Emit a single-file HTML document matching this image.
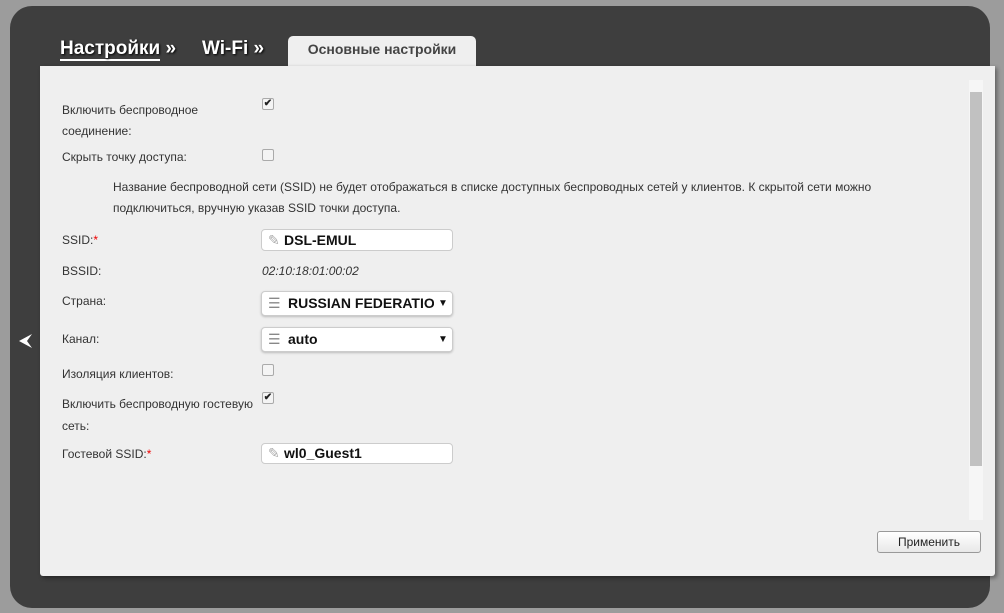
<!DOCTYPE html>
<html><head><meta charset="utf-8"><style>
*{margin:0;padding:0;box-sizing:border-box}
body{width:1004px;height:613px;background:#9c9c9c;position:relative;overflow:hidden;font-family:"Liberation Sans",Arial,sans-serif;font-size:12px;color:#333}
.dark{position:absolute;left:10px;top:6px;width:980px;height:602px;background:#3e3e3e;border-radius:22px}
.panel{position:absolute;left:40px;top:66px;width:955px;height:510px;background:#efefef;border-radius:0 0 3px 3px;box-shadow:2px 2px 4px rgba(0,0,0,.4)}
.tab{position:absolute;left:288px;top:36px;width:188px;height:32px;background:#efefef;border-radius:5px 5px 0 0;text-align:center;font-weight:bold;font-size:14px;color:#444;line-height:26px}
.bc{position:absolute;top:38px;font-weight:bold;font-size:19px;color:#fff;text-shadow:1px 1px 2px #000}
.l{position:absolute;left:62px;color:#333}
.cb{position:absolute;left:262px;width:12px;height:12px;border:1px solid #aaa;border-radius:2px;background:#f4f4f4;font-size:10px;line-height:10px;text-align:center;color:#222;font-weight:bold}
.in{position:absolute;left:261px;width:192px;background:#fff;border:1px solid #ccc;border-radius:4px;font-weight:bold;font-size:14px;color:#111;padding-left:22px;white-space:nowrap;overflow:hidden}
.sel{padding-right:20px}
.star{color:#e00;vertical-align:top;font-size:12px}
.arrow{position:absolute;right:0;top:0;width:18px;text-align:center;font-size:10px;background:#fff}
</style></head><body>
<div class="dark"></div>
<div class="bc" style="left:60px"><span style="border-bottom:2px solid #fff">Настройки</span> »</div>
<div class="bc" style="left:202px">Wi-Fi »</div>
<div class="tab">Основные настройки</div>
<div class="panel"></div>
<svg style="position:absolute;left:18px;top:333px" width="16" height="16"><path d="M1 8 L14 1 L9 8 L14 15 Z" fill="#fff"/></svg>
<div class="l" style="top:100px;line-height:21px">Включить беспроводное<br>соединение:</div>
<div class="cb" style="top:98px">✔</div>
<div class="l" style="top:150px">Скрыть точку доступа:</div>
<div class="cb" style="top:149px"></div>
<div class="l" style="left:113px;top:177px;line-height:21px">Название беспроводной сети (SSID) не будет отображаться в списке доступных беспроводных сетей у клиентов. К скрытой сети можно<br>подключиться, вручную указав SSID точки доступа.</div>
<div class="l" style="top:233px">SSID:<span class="star">*</span></div>
<div class="in" style="top:229px;height:22px;line-height:20px"><span style="position:absolute;left:6px;color:#aaa;font-weight:normal">✎</span>DSL-EMUL</div>
<div class="l" style="top:264px">BSSID:</div>
<div class="l" style="left:262px;top:264px;font-style:italic">02:10:18:01:00:02</div>
<div class="l" style="top:294px">Страна:</div>
<div class="in sel" style="top:291px;height:25px;line-height:23px;padding-left:26px;box-shadow:0 1px 2px #bbb"><span style="position:absolute;left:6px;color:#888;font-weight:normal">☰</span>RUSSIAN FEDERATIOI<span class="arrow">▼</span></div>
<div class="l" style="top:332px">Канал:</div>
<div class="in sel" style="top:327px;height:25px;line-height:23px;padding-left:26px;box-shadow:0 1px 2px #bbb"><span style="position:absolute;left:6px;color:#888;font-weight:normal">☰</span>auto<span class="arrow">▼</span></div>
<div class="l" style="top:367px">Изоляция клиентов:</div>
<div class="cb" style="top:364px"></div>
<div class="l" style="top:393px;line-height:22px">Включить беспроводную гостевую<br>сеть:</div>
<div class="cb" style="top:392px">✔</div>
<div class="l" style="top:447px">Гостевой SSID:<span class="star">*</span></div>
<div class="in" style="top:443px;height:21px;line-height:19px"><span style="position:absolute;left:6px;color:#aaa;font-weight:normal">✎</span>wl0_Guest1</div>
<div style="position:absolute;left:969px;top:80px;width:14px;height:440px;background:#f6f6f6"></div>
<div style="position:absolute;left:970px;top:92px;width:12px;height:374px;background:#c1c1c1"></div>
<div style="position:absolute;left:877px;top:531px;width:104px;height:22px;border:1px solid #999;border-radius:3px;background:linear-gradient(#fff,#e8e8e8);text-align:center;line-height:20px;color:#222">Применить</div>
</body></html>
